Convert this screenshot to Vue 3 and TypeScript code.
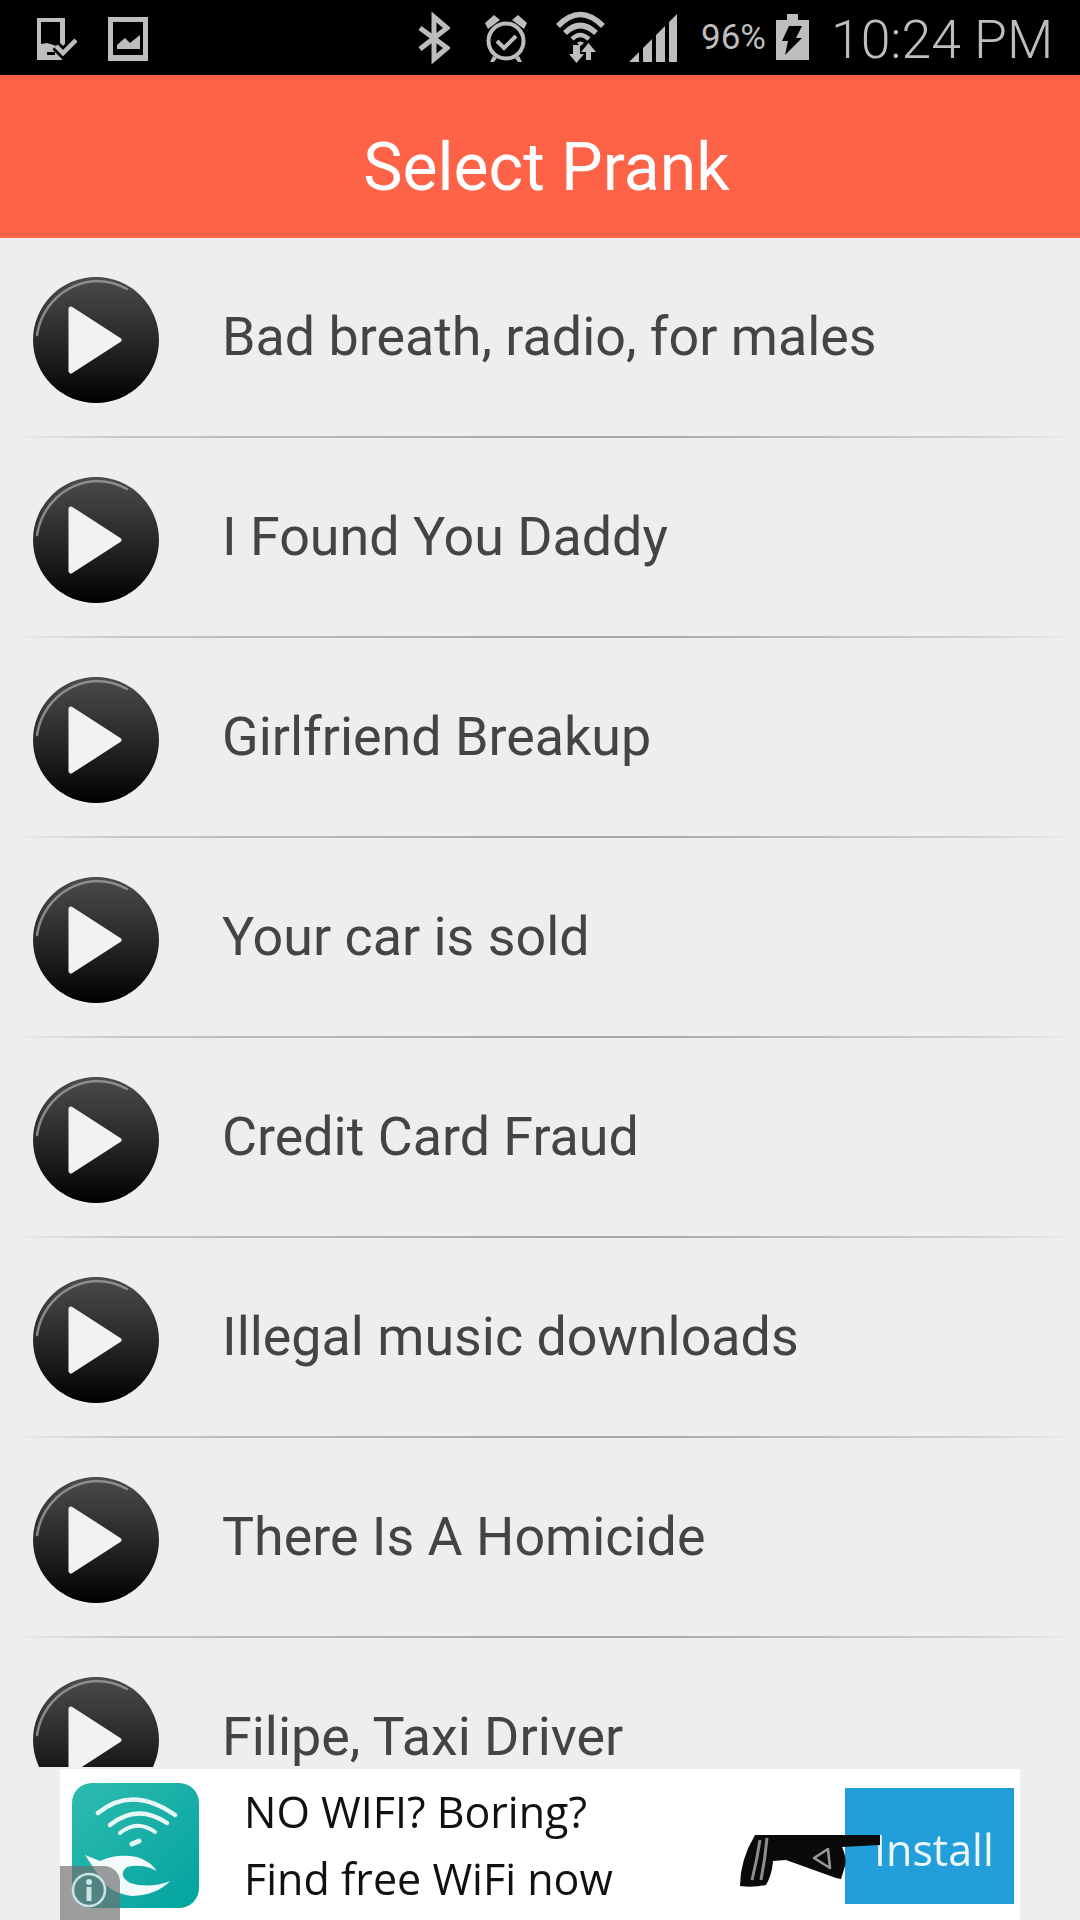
<script setup lang="ts">
const pranks: string[] = [
  'Bad breath, radio, for males',
  'I Found You Daddy',
  'Girlfriend Breakup',
  'Your car is sold',
  'Credit Card Fraud',
  'Illegal music downloads',
  'There Is A Homicide',
  'Filipe, Taxi Driver',
]
</script>

<template>
  <div class="screen">
    <div class="status">
      <svg class="ic" width="40" height="75" viewBox="37 0 40 75">
        <path fill="#bdbdbd" fill-rule="evenodd" d="M37 18H65V46L62 60H37ZM41 22V44L47 43L60 47V22Z" />
        <path fill="#000" d="M47 52H55V55H47Z" />
        <path fill="none" stroke="#000" stroke-width="10" d="M56 46L63 53L76 40" />
        <path fill="none" stroke="#bdbdbd" stroke-width="4.5" d="M56 46L63 53L76 40" />
      </svg>
      <svg class="ic second" width="40" height="75" viewBox="108 0 40 75">
        <path fill="#bdbdbd" fill-rule="evenodd" d="M108 17H148V61H108ZM113 22V55H143V22Z" />
        <path fill="#bdbdbd" d="M117 49V45L125 38L130 43L140 35V49Z" />
      </svg>

      <svg class="ic bt" width="32" height="75" viewBox="418 0 32 75">
        <path fill="none" stroke="#bdbdbd" stroke-width="5" d="M420 28L447 48L434 59V17L447 28L420 49" />
      </svg>
      <svg class="ic alarm" width="44" height="75" viewBox="484 0 44 75">
        <circle cx="506" cy="41" r="17.5" fill="none" stroke="#bdbdbd" stroke-width="4" />
        <path fill="#bdbdbd" d="M485 23L494 15L500 20L488 29ZM527 23L518 15L512 20L524 29ZM493 56L497 58L494 62H490ZM519 56L515 58L518 62H522Z" />
        <path fill="none" stroke="#bdbdbd" stroke-width="4" d="M497 41L504 48L516 36" />
      </svg>
      <svg class="ic wifi" width="49" height="75" viewBox="556 0 49 75">
        <path fill="none" stroke="#bdbdbd" stroke-width="5.5" d="M558 26Q580 3 603 26M565 33Q580 18 596 33" />
        <path fill="none" stroke="#bdbdbd" stroke-width="4.5" d="M572 39Q580 31 589 39" />
        <path fill="#bdbdbd" d="M577 43Q580 40 584 43L580.5 46ZM573 45H580V54H584L576.5 63L569 54H573ZM586 52V60H591V52H596L588.5 43L581 52Z" />
      </svg>
      <svg class="ic signal" width="48" height="75" viewBox="629 0 48 75">
        <path fill="#bdbdbd" d="M629 62L639 52V62ZM643 62V48L652 39V62ZM656 62V35L665 26V62ZM669 62V22L677 14V62Z" />
      </svg>
      <span class="pct">96%</span>
      <svg class="ic battery" width="33" height="75" viewBox="776 0 33 75">
        <path fill="#bdbdbd" d="M787 14H798V20H809V60H776V20H787Z" />
        <path fill="#000" d="M789 26H802L796 38H802L785 55L788 41H782Z" />
      </svg>
      <span class="clock">10:24 PM</span>
    </div>

    <div class="header">Select Prank</div>

    <div class="list">
      <div v-for="(name, i) in pranks" :key="name" class="item">
        <div class="row">
          <svg class="ball" width="126" height="126" viewBox="0 0 126 126">
            <defs>
              <linearGradient :id="`ball${i}`" x1="0" y1="0" x2="0" y2="1">
                <stop offset="0" stop-color="#4a4b4d" />
                <stop offset="0.5" stop-color="#28292a" />
                <stop offset="1" stop-color="#000" />
              </linearGradient>
            </defs>
            <circle cx="63" cy="63" r="63" :fill="`url(#ball${i})`" />
            <path class="shine" fill="none" stroke="#a5a5a5" stroke-width="2.5" stroke-linecap="round" d="M4 58C9 28 32 6 63 4C74 4 85 7 94 12" />
            <path fill="#f2f2f2" stroke="#f2f2f2" stroke-width="5" stroke-linejoin="round" d="M38 32L86 63L38 94Z" />
          </svg>
          <span class="name">{{ name }}</span>
        </div>
        <div class="divider"></div>
      </div>
    </div>

    <div class="ad-slot">
      <div class="ad">
        <svg class="ad-logo" width="127" height="125" viewBox="0 0 127 125">
          <defs>
            <linearGradient id="teal" x1="0" y1="0" x2="1" y2="1">
              <stop offset="0" stop-color="#2ebbb0" />
              <stop offset="1" stop-color="#02a39f" />
            </linearGradient>
          </defs>
          <rect width="127" height="125" rx="20" fill="url(#teal)" />
          <g fill="none" stroke="#e6f7f5" stroke-linecap="round">
            <path stroke-width="4.5" d="M26 30Q60 2 103 32" />
            <path stroke-width="4.5" d="M38 42Q65 20 95 40" />
            <path stroke-width="4" d="M48 50Q65 36 83 49" />
            <path stroke-width="5" d="M60 61L67 58" />
          </g>
          <path fill="#f2fbfa" d="M13 72L28 78Q45 70 65 74Q78 78 85 88Q70 80 55 84Q45 92 58 100Q78 106 98 98Q85 112 60 113Q35 110 25 90Z" />
        </svg>
        <div class="ad-copy">
          <div>NO WIFI? Boring?</div>
          <div>Find free WiFi now</div>
        </div>
        <div class="install">Install</div>
        <svg class="hand" width="146" height="56" viewBox="736 1832 146 56">
          <path fill="#0a0a0a" d="M755 1835H880V1845L842 1847Q847 1858 845 1866L841 1879L836 1878L786 1860L773 1861Q772 1875 766 1885Q752 1888 740 1886Q740 1860 755 1835Z" />
          <path fill="none" stroke="#8d8d8d" stroke-width="3" d="M760 1840Q757 1860 752 1880M767 1838Q765 1860 761 1880" />
          <path fill="none" stroke="#9a9a9a" stroke-width="2.5" stroke-linejoin="round" d="M814 1858L828 1849L830 1868Z" />
        </svg>
        <div class="info">
          <svg width="36" height="36" viewBox="0 0 36 36">
            <circle cx="18" cy="18" r="16" fill="none" stroke="#c9e4e2" stroke-width="2.5" />
            <circle cx="18" cy="10" r="3" fill="#c9e4e2" />
            <rect x="15.5" y="15" width="5" height="14" fill="#c9e4e2" />
          </svg>
        </div>
      </div>
    </div>
  </div>
</template>

<style>
html, body {
  margin: 0;
  background: #eeeeee;
}
</style>

<style scoped>
.screen {
  width: 1080px;
  height: 1920px;
  display: flex;
  flex-direction: column;
  overflow: hidden;
  background: #eeeeee;
  font-family: Roboto, sans-serif;
}

.status {
  height: 75px;
  flex: none;
  box-sizing: border-box;
  padding: 0 0 0 37px;
  display: flex;
  align-items: center;
  background: #000;
  color: #bdbdbd;
}
.ic { flex: none; }
.second { margin-left: 31px; }
.bt { margin-left: 270px; }
.alarm { margin-left: 34px; }
.wifi { margin-left: 28px; }
.signal { margin-left: 24px; }
.pct {
  margin-left: 24px;
  width: 65px;
  font-size: 35px;
  white-space: nowrap;
}
.battery { margin-left: 10px; }
.clock {
  margin: 4px 0 0 22px;
  font-size: 53.5px;
  font-weight: 300;
  white-space: nowrap;
}

.header {
  height: 163px;
  flex: none;
  box-sizing: border-box;
  padding: 22px 0 0 13px;
  display: flex;
  align-items: center;
  justify-content: center;
  background: #ff6347;
  color: #fff;
  font-size: 66px;
}

.list {
  height: 1529px;
  flex: none;
  overflow: hidden;
}
.row {
  height: 198px;
  box-sizing: border-box;
  padding: 39px 0 0 33px;
  display: flex;
  align-items: flex-start;
}
.ball { flex: none; }
.shine { filter: blur(0.5px); opacity: 0.75; }
.name {
  margin-left: 63px;
  height: 126px;
  line-height: 120px;
  font-size: 53.8px;
  color: #444;
  white-space: nowrap;
}
.divider {
  height: 2px;
  background: linear-gradient(90deg, transparent 1%, #c4c4c4 12%, #a8a8a8 50%, #a8a8a8 60%, #d0d0d0 90%, transparent 100%);
}

.ad-slot {
  flex: 1;
  padding: 2px 60px 0;
}
.ad {
  position: relative;
  height: 151px;
  display: flex;
  background: #fff;
}
.ad-logo {
  flex: none;
  margin: 14px 0 0 12px;
  filter: blur(0.6px);
}
.ad-copy {
  margin: 9px 0 0 45px;
  font-family: "Open Sans", sans-serif;
  font-weight: 500;
  font-size: 43px;
  line-height: 67px;
  color: #111;
  white-space: nowrap;
  filter: blur(0.7px);
}
.install {
  position: absolute;
  top: 19px;
  right: 6px;
  width: 169px;
  height: 116px;
  box-sizing: border-box;
  padding: 31px 0 0 29px;
  background: #229fdb;
  color: #eef8fd;
  font-family: "Open Sans", sans-serif;
  font-size: 43px;
  line-height: 62px;
  filter: blur(0.5px);
}
.hand {
  position: absolute;
  left: 676px;
  top: 63px;
  filter: blur(0.7px);
}
.info {
  position: absolute;
  left: 0;
  bottom: 0;
  width: 60px;
  height: 54px;
  box-sizing: border-box;
  padding: 6px 0 0 11px;
  border-top-right-radius: 16px;
  background: rgba(110, 110, 110, 0.68);
}
</style>
